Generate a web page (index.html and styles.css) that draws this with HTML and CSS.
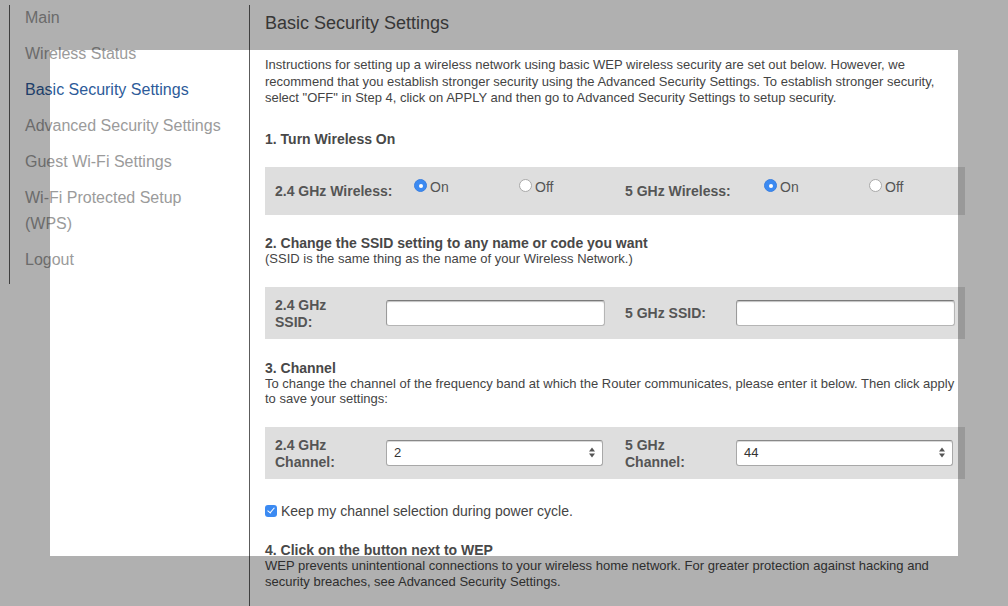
FILE: index.html
```html
<!DOCTYPE html>
<html>
<head>
<meta charset="utf-8">
<title>Basic Security Settings</title>
<link rel="stylesheet" href="styles.css">
</head>
<body>
<div class="page">
  <nav class="sidebar">
    <ul class="nav">
      <li><a href="#">Main</a></li>
      <li><a href="#">Wireless Status</a></li>
      <li><a href="#" class="active">Basic Security Settings</a></li>
      <li><a href="#">Advanced Security Settings</a></li>
      <li><a href="#">Guest Wi-Fi Settings</a></li>
      <li><a href="#">Wi-Fi Protected Setup<br>(WPS)</a></li>
      <li><a href="#">Logout</a></li>
    </ul>
  </nav>
  <main class="main">
    <h1 class="title">Basic Security Settings</h1>
    <p class="intro">Instructions for setting up a wireless network using basic WEP wireless security are set out below. However, we recommend that you establish stronger security using the Advanced Security Settings. To establish stronger security, select "OFF" in Step 4, click on APPLY and then go to Advanced Security Settings to setup security.</p>

    <section class="step step1">
      <h2 class="step-title">1. Turn Wireless On</h2>
      <div class="panel panel-radio">
        <div class="half">
          <span class="label">2.4 GHz Wireless:</span>
          <label class="radio"><span class="dot on"></span>On</label>
          <label class="radio"><span class="dot"></span>Off</label>
        </div>
        <div class="half">
          <span class="label">5 GHz Wireless:</span>
          <label class="radio"><span class="dot on"></span>On</label>
          <label class="radio"><span class="dot"></span>Off</label>
        </div>
      </div>
    </section>

    <section class="step step2">
      <h2 class="step-title">2. Change the SSID setting to any name or code you want</h2>
      <p class="step-text">(SSID is the same thing as the name of your Wireless Network.)</p>
      <div class="panel panel-fields">
        <div class="half">
          <span class="label">2.4 GHz<br>SSID:</span>
          <span class="textbox"></span>
        </div>
        <div class="half">
          <span class="label">5 GHz SSID:</span>
          <span class="textbox"></span>
        </div>
      </div>
    </section>

    <section class="step step3">
      <h2 class="step-title">3. Channel</h2>
      <p class="step-text">To change the channel of the frequency band at which the Router communicates, please enter it below. Then click apply to save your settings:</p>
      <div class="panel panel-fields">
        <div class="half">
          <span class="label">2.4 GHz<br>Channel:</span>
          <span class="selectbox">2<svg class="arrows" width="6" height="11" viewBox="0 0 6 11"><path d="M0 4.5 L3 0.5 L6 4.5 Z M0 6.5 L3 10.5 L6 6.5 Z" fill="#555"/></svg></span>
        </div>
        <div class="half">
          <span class="label">5 GHz<br>Channel:</span>
          <span class="selectbox">44<svg class="arrows" width="6" height="11" viewBox="0 0 6 11"><path d="M0 4.5 L3 0.5 L6 4.5 Z M0 6.5 L3 10.5 L6 6.5 Z" fill="#555"/></svg></span>
        </div>
      </div>
    </section>

    <label class="keep"><span class="check"></span>Keep my channel selection during power cycle.</label>

    <section class="step step4">
      <h2 class="step-title">4. Click on the button next to WEP</h2>
      <p class="step-text wide">WEP prevents unintentional connections to your wireless home network. For greater protection against hacking and security breaches, see Advanced Security Settings.</p>
    </section>
  </main>
</div>
<div class="spotlight"></div>
</body>
</html>
```

FILE: styles.css
```css
html, body {
  margin: 0;
  padding: 0;
  overflow: hidden;
  height: 100%;
  background: #fff;
}
body {
  font-family: "Liberation Sans", Arial, sans-serif;
  color: #444;
}
.page {
  display: flex;
  align-items: flex-start;
  min-height: 100vh;
}
.sidebar {
  width: 240px;
  padding-left: 9px;
  padding-top: 5px;
  flex: none;
}
.nav {
  list-style: none;
  margin: 0;
  padding: 0 0 11px 15px;
  border-left: 1px solid #5c5c5c;
  display: flex;
  flex-direction: column;
  gap: 10px;
}
.nav a {
  display: block;
  font-size: 16px;
  line-height: 26px;
  color: #9b9b9b;
  text-decoration: none;
}
.nav a.active {
  color: #2d5b99;
}
.main {
  flex: none;
  width: 700px;
  margin-top: 5px;
  border-left: 1px solid #5c5c5c;
  padding: 6px 0 0 15px;
  min-height: 700px;
}
.title {
  margin: 0;
  font-size: 18px;
  line-height: 24px;
  font-weight: normal;
  color: #505050;
}
.intro {
  margin: 22px 0 0;
  font-size: 13px;
  line-height: 16.5px;
  color: #444;
}
.step1 {
  margin-top: 25px;
}
.step2 {
  margin-top: 21px;
}
.step3 {
  margin-top: 22px;
}
.step4 {
  margin-top: 24px;
}
.step-title {
  margin: 0;
  font-size: 14px;
  line-height: 15px;
  font-weight: bold;
  color: #484848;
}
.step-text {
  margin: 0;
  font-size: 13px;
  line-height: 15px;
  color: #444;
}
.step-text.wide {
  line-height: 16px;
}
.panel {
  background: #dedede;
  display: flex;
  margin-top: 21px;
}
.step1 .panel {
  margin-top: 20px;
}
.half {
  width: 340px;
  padding-left: 10px;
  display: grid;
  align-items: center;
}
.panel-radio {
  height: 48px;
}
.panel-radio .half {
  grid-template-columns: 139px 105px 96px;
}
.panel-fields {
  height: 52px;
}
.panel-fields .half {
  grid-template-columns: 111px 219px;
}
.label {
  font-size: 14px;
  font-weight: bold;
  line-height: 17px;
  color: #555;
}
.panel-fields .label {
  padding-top: 2px;
}
.panel-radio .label {
  padding-top: 1px;
}
.radio {
  display: flex;
  align-items: center;
  font-size: 14px;
  line-height: 16px;
  color: #555;
  margin-bottom: 8px;
}
.dot {
  width: 13px;
  height: 13px;
  box-sizing: border-box;
  border-radius: 50%;
  border: 1px solid #a9a9a9;
  background: #fff;
  margin-right: 3px;
  margin-top: -2px;
  position: relative;
}
.dot.on {
  background: #3b8af2;
  border-color: #3b80e0;
}
.dot.on::after {
  content: "";
  position: absolute;
  left: 3.5px;
  top: 3.5px;
  width: 4px;
  height: 4px;
  border-radius: 50%;
  background: #fff;
}
.textbox, .selectbox {
  display: flex;
  align-items: center;
  height: 26px;
  box-sizing: border-box;
  background: #fff;
  border: 1px solid #b5b5b5;
  border-top-color: #7a7a7a;
  border-left-color: #9a9a9a;
  border-radius: 3px;
  box-shadow: inset 0 1px 1px rgba(0,0,0,0.25);
}
.selectbox {
  width: 217px;
  padding: 0 7px 0 7px;
  font-size: 13px;
  color: #333;
  justify-content: space-between;
  border-color: #a8a8a8;
  border-top-color: #888;
  box-shadow: inset 0 1px 0 rgba(0,0,0,0.15);
}
.arrows {
  display: block;
}
.keep {
  display: flex;
  align-items: center;
  margin-top: 24px;
  font-size: 14px;
  line-height: 16px;
  color: #444;
}
.check {
  width: 12px;
  height: 12px;
  border-radius: 3px;
  background: #3b8af2;
  margin-right: 4px;
  position: relative;
}
.check::after {
  content: "";
  position: absolute;
  left: 4px;
  top: 1.5px;
  width: 3px;
  height: 6px;
  border: solid #fff;
  border-width: 0 1.5px 1.5px 0;
  transform: rotate(40deg);
}
.spotlight {
  position: absolute;
  left: 50px;
  top: 50px;
  width: 908px;
  height: 506px;
  box-shadow: 0 0 0 3000px rgba(0,0,0,0.31);
  pointer-events: none;
}
```
